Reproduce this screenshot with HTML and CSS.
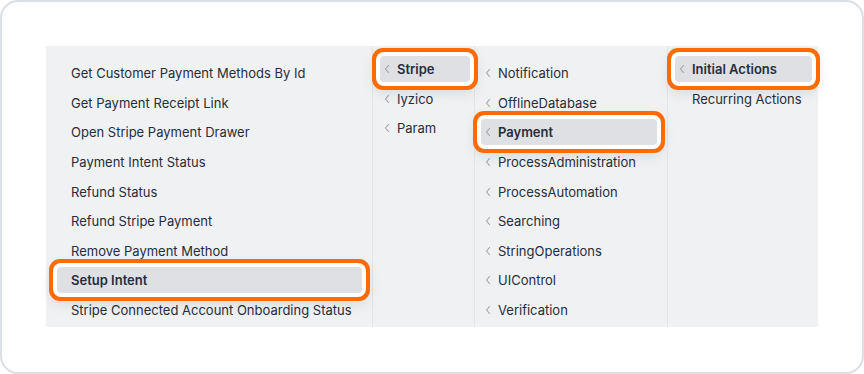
FILE: index.html
```html
<!DOCTYPE html>
<html>
<head>
<meta charset="utf-8">
<link rel="stylesheet" href="styles.css">
</head>
<body>
<div class="card">
  <div class="panel">
    <div class="col col1">
      <div class="item">Get Customer Payment Methods By Id</div>
      <div class="item">Get Payment Receipt Link</div>
      <div class="item">Open Stripe Payment Drawer</div>
      <div class="item">Payment Intent Status</div>
      <div class="item">Refund Status</div>
      <div class="item">Refund Stripe Payment</div>
      <div class="item">Remove Payment Method</div>
      <div class="item sel">Setup Intent</div>
      <div class="item">Stripe Connected Account Onboarding Status</div>
    </div>
    <div class="col col2">
      <div class="item sub sel"><svg class="chev" viewBox="0 0 6 10"><polyline points="4.5,1.5 1.5,5 4.5,8.5"/></svg>Stripe</div>
      <div class="item sub"><svg class="chev" viewBox="0 0 6 10"><polyline points="4.5,1.5 1.5,5 4.5,8.5"/></svg>Iyzico</div>
      <div class="item sub"><svg class="chev" viewBox="0 0 6 10"><polyline points="4.5,1.5 1.5,5 4.5,8.5"/></svg>Param</div>
    </div>
    <div class="col col3">
      <div class="item sub"><svg class="chev" viewBox="0 0 6 10"><polyline points="4.5,1.5 1.5,5 4.5,8.5"/></svg>Notification</div>
      <div class="item sub"><svg class="chev" viewBox="0 0 6 10"><polyline points="4.5,1.5 1.5,5 4.5,8.5"/></svg>OfflineDatabase</div>
      <div class="item sub sel"><svg class="chev" viewBox="0 0 6 10"><polyline points="4.5,1.5 1.5,5 4.5,8.5"/></svg>Payment</div>
      <div class="item sub"><svg class="chev" viewBox="0 0 6 10"><polyline points="4.5,1.5 1.5,5 4.5,8.5"/></svg>ProcessAdministration</div>
      <div class="item sub"><svg class="chev" viewBox="0 0 6 10"><polyline points="4.5,1.5 1.5,5 4.5,8.5"/></svg>ProcessAutomation</div>
      <div class="item sub"><svg class="chev" viewBox="0 0 6 10"><polyline points="4.5,1.5 1.5,5 4.5,8.5"/></svg>Searching</div>
      <div class="item sub"><svg class="chev" viewBox="0 0 6 10"><polyline points="4.5,1.5 1.5,5 4.5,8.5"/></svg>StringOperations</div>
      <div class="item sub"><svg class="chev" viewBox="0 0 6 10"><polyline points="4.5,1.5 1.5,5 4.5,8.5"/></svg>UIControl</div>
      <div class="item sub"><svg class="chev" viewBox="0 0 6 10"><polyline points="4.5,1.5 1.5,5 4.5,8.5"/></svg>Verification</div>
    </div>
    <div class="col col4">
      <div class="item sub sel"><svg class="chev" viewBox="0 0 6 10"><polyline points="4.5,1.5 1.5,5 4.5,8.5"/></svg>Initial Actions</div>
      <div class="item sub nochev">Recurring Actions</div>
    </div>
  </div>
</div>
</body>
</html>
```
FILE: styles.css
```css
* { box-sizing: border-box; }
html, body { margin: 0; padding: 0; background: #ffffff; }
body {
  width: 864px;
  height: 374px;
  font-family: Inter, "Noto Sans", sans-serif;
  font-size: 13px;
  color: #272d3b;
}
.card {
  width: 864px;
  height: 374px;
  border: 2px solid #dcdfe3;
  border-radius: 18px;
  padding: 44px 44px;
  background: #fff;
}
.panel {
  display: flex;
  height: 281px;
  width: 772px;
  background: #f0f1f3;
}
.col {
  display: flex;
  flex-direction: column;
  gap: 3.65px;
  border-right: 1px solid #e3e5e8;
}
.col1 { width: 327px; padding: 14px 10px 0 11px; }
.col2 { width: 102px; padding: 10px 4px 0 7px; }
.col3 { width: 193px; padding: 14px 10px 0 6px; }
.col4 { flex: 1; padding: 10px 6px 0 7px; border-right: none; }
.item {
  height: 26px;
  display: flex;
  align-items: center;
  padding-left: 14px;
  border-radius: 4px;
  white-space: nowrap;
}
.item.sub { padding-left: 4px; }
.item.nochev { padding-left: 17px; }
.chev {
  width: 6px;
  height: 10px;
  margin-right: 7px;
  fill: none;
  stroke: #9ba1a9;
  stroke-width: 1.1;
  stroke-linecap: round;
  stroke-linejoin: round;
  flex: none;
}
.item.sel {
  background: #dfe0e4;
  font-weight: 600;
  box-shadow: 0 0 0 4px #ffffff, 0 0 0 8px #ff6b00, 0 5px 14px 6px rgba(0, 0, 0, 0.10);
  position: relative;
}
```
